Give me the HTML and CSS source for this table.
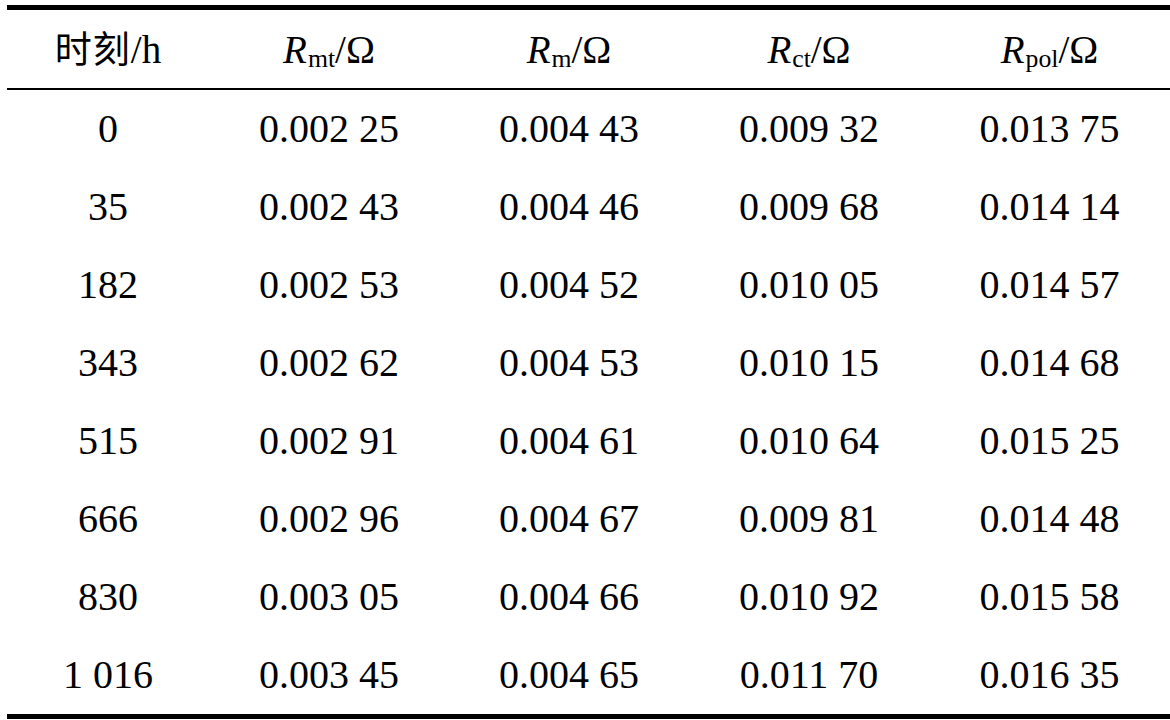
FILE: index.html
```html
<!DOCTYPE html>
<html lang="zh">
<head>
<meta charset="utf-8">
<title>阻抗拟合结果</title>
<link rel="stylesheet" href="styles.css">
</head>
<body>
<table class="data">
  <colgroup>
    <col class="c-time">
    <col class="c-val">
    <col class="c-val">
    <col class="c-val">
    <col class="c-last">
  </colgroup>
  <thead>
    <tr>
      <th><span class="cjk">时刻</span>/h</th>
      <th><i>R</i><sub>mt</sub>/Ω</th>
      <th><i>R</i><sub>m</sub>/Ω</th>
      <th><i>R</i><sub>ct</sub>/Ω</th>
      <th><i>R</i><sub>pol</sub>/Ω</th>
    </tr>
  </thead>
  <tbody>
    <tr><td>0</td><td>0.002 25</td><td>0.004 43</td><td>0.009 32</td><td>0.013 75</td></tr>
    <tr><td>35</td><td>0.002 43</td><td>0.004 46</td><td>0.009 68</td><td>0.014 14</td></tr>
    <tr><td>182</td><td>0.002 53</td><td>0.004 52</td><td>0.010 05</td><td>0.014 57</td></tr>
    <tr><td>343</td><td>0.002 62</td><td>0.004 53</td><td>0.010 15</td><td>0.014 68</td></tr>
    <tr><td>515</td><td>0.002 91</td><td>0.004 61</td><td>0.010 64</td><td>0.015 25</td></tr>
    <tr><td>666</td><td>0.002 96</td><td>0.004 67</td><td>0.009 81</td><td>0.014 48</td></tr>
    <tr><td>830</td><td>0.003 05</td><td>0.004 66</td><td>0.010 92</td><td>0.015 58</td></tr>
    <tr><td>1 016</td><td>0.003 45</td><td>0.004 65</td><td>0.011 70</td><td>0.016 35</td></tr>
  </tbody>
</table>
</body>
</html>
```
FILE: styles.css
```css
html, body {
  margin: 0;
  padding: 0;
  background: #ffffff;
}

body {
  padding: 5px 0 0 7px;
  font-family: "Liberation Serif", "Times New Roman", "Noto Sans CJK SC", serif;
  color: #000000;
}

.data {
  width: 1163px;
  table-layout: fixed;
  border-collapse: collapse;
  border-spacing: 0;
  font-size: 39px;
}

.c-time { width: 202px; }
.c-val { width: 240px; }
.c-last { width: 241px; }

.data thead tr {
  border-top: 5px solid #000;
  border-bottom: 2px solid #000;
}

.data tbody tr:last-child {
  border-bottom: 5px solid #000;
}

.data th,
.data td {
  padding: 0;
  text-align: center;
  vertical-align: middle;
  font-weight: normal;
  white-space: nowrap;
  line-height: 1;
}

.data th {
  height: 78px;
}

.data td {
  height: 78px;
  font-size: 40px;
}

.cjk {
  font-family: "Noto Sans CJK SC", sans-serif;
  font-size: 37px;
  letter-spacing: 1px;
}

.data th i {
  font-style: italic;
  margin-right: 1px;
}

.data th sub {
  font-size: 0.66em;
  vertical-align: -0.16em;
  line-height: 0;
}
```
